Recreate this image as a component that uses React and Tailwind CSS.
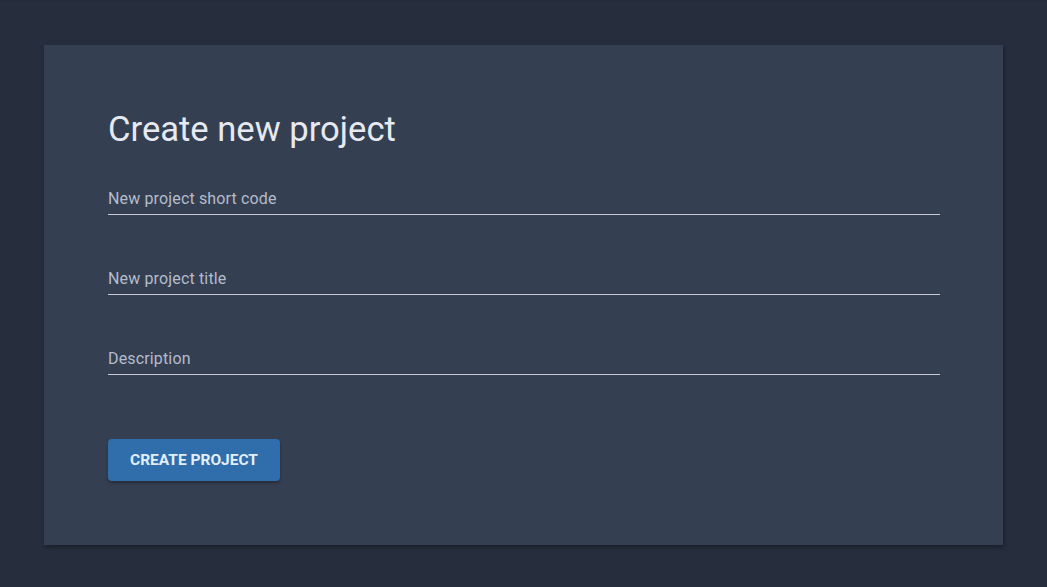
export default function App() {
    const fields = ['New project short code', 'New project title', 'Description'];

    return (
        <div className="min-h-[587px] bg-[#262d3d] px-[44px] pt-[45px] pb-[42px] font-['Roboto',sans-serif] relative">
            {/* app bar shadow remnant */}
            <div className="absolute top-0 left-0 right-0 h-[3px] bg-gradient-to-b from-[#20263360] to-transparent" />

            <div className="bg-[#353f52] px-16 pt-16 pb-[64px] shadow-[1px_2px_4px_rgba(0,0,0,0.35)]">
                <h1 className="text-[34.6px] leading-[40px] text-[#e6e9ef] font-normal">
                    Create new project
                </h1>

                <div className="w-[832px]">
                    {fields.map((label, i) => (
                        <div
                            key={label}
                            className={`${i === 0 ? 'mt-[38px]' : 'mt-[52px]'} border-b border-[#c5cad6] pb-[3px]`}
                        >
                            <span className="block text-base leading-6 tracking-[0.15px] text-[#b4bccb]">{label}</span>
                        </div>
                    ))}
                </div>

                <button className="mt-16 h-[42px] w-[172px] rounded bg-[#2f6eab] pt-px text-[15.5px] font-bold text-[#e3eefa] shadow-[0_2px_3px_rgba(0,0,0,0.3)]">
                    CREATE PROJECT
                </button>
            </div>
        </div>
    );
}
